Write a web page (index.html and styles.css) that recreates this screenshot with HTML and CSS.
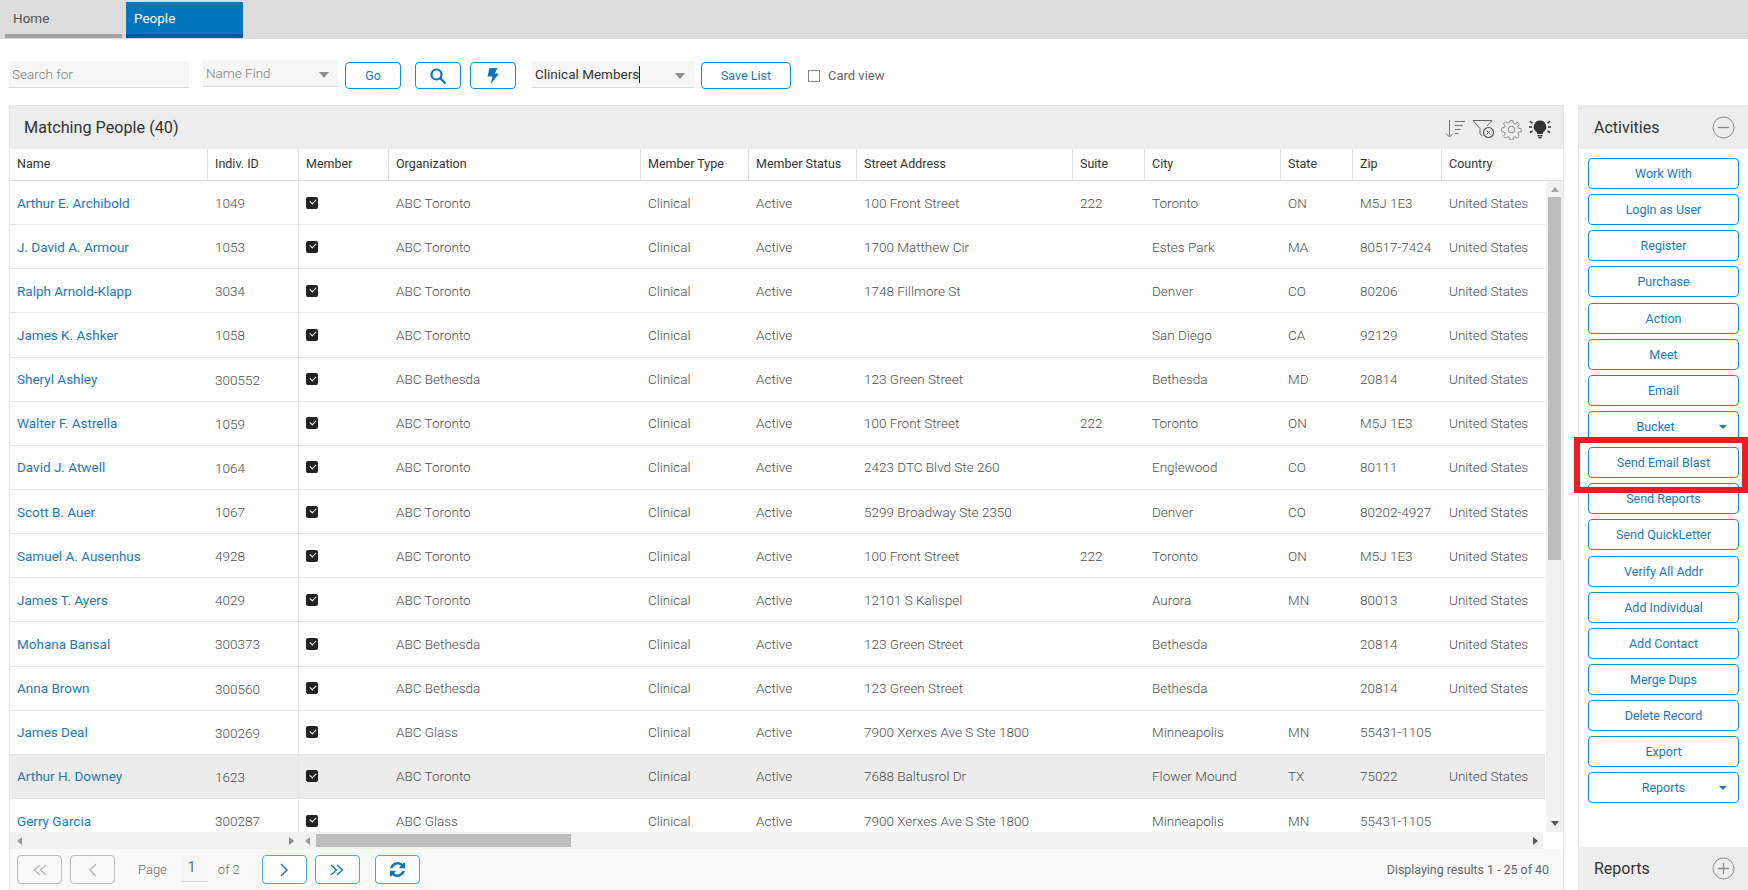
FILE: index.html
```html
<!DOCTYPE html>
<html lang="en">
<head>
<meta charset="utf-8">
<title>People</title>
<link rel="stylesheet" href="styles.css">
</head>
<body>
<nav class="topbar">
  <a class="tab tab-home">Home</a>
  <a class="tab tab-active">People</a>
</nav>
<div class="toolbar">
  <div class="field field-search"><span class="placeholder">Search for</span></div>
  <div class="field field-find"><span class="placeholder">Name Find</span><i class="caret"></i></div>
  <button class="btn btn-go">Go</button>
  <button class="btn btn-icon btn-search"><svg width="18" height="18" viewBox="0 0 18 18" fill="none" stroke="#0a75bd" stroke-width="2.2"><circle cx="7.5" cy="7.5" r="5"/><path d="M11.2 11.2 16 16" stroke-linecap="round"/></svg></button>
  <button class="btn btn-icon btn-bolt"><svg width="14" height="18" viewBox="0 0 14 18" fill="#0a75bd"><path d="M3.5 1h8L8.8 6.5H13L4.5 17.5 6.6 9.5H1.5z"/></svg></button>
  <div class="field field-list"><span class="value">Clinical Members</span><i class="cursor"></i><i class="caret"></i></div>
  <button class="btn btn-save">Save List</button>
  <label class="cardview"><i class="box"></i>Card view</label>
</div>
<main class="main">
  <section class="grid">
    <header class="grid-head">
      <h2 class="grid-title">Matching People (40)</h2>
      <div class="grid-tools">
        <svg width="21" height="20" viewBox="0 0 21 20" fill="none" stroke="#777" stroke-width="1"><path d="M4.5 1v17M1 14.5l3.500 3.500 3.500-3.500M10 2.500h10M10 6.500h8M10 10.500h5.500M10 14.500h3.500"/></svg>
        <svg width="23" height="20" viewBox="0 0 23 20" fill="none" stroke="#666" stroke-width="1"><path d="M1 1.500h19l-5 5.500M1 1.500l7 8v5.500l2.500 2"/><circle cx="16.500" cy="13.500" r="5" stroke="#555" stroke-width="1.200"/><path d="M14.700 11.700l3.600 3.600M18.300 11.700l-3.600 3.600"/></svg>
        <svg width="21" height="21" viewBox="0 0 21 21" fill="none" stroke="#888" stroke-width="1"><circle cx="10.500" cy="10.500" r="3.200"/><path d="M9 1h3l.5 2.800 1.800.8 2.400-1.600 2.100 2.100-1.600 2.400.8 1.800 2.800.5v3l-2.800.5-.8 1.800 1.600 2.400-2.100 2.100-2.400-1.600-1.800.8-.5 2.800H9l-.5-2.800-1.800-.8-2.400 1.600-2.100-2.100 1.600-2.400-.8-1.800-2.800-.5V9l2.800-.5.8-1.800L2.200 4.300l2.100-2.100 2.400 1.600 1.800-.8z" transform="translate(.5 .5) scale(.95)"/></svg>
        <svg width="24" height="21" viewBox="0 0 24 21"><path d="M12 1.500a6.300 6.300 0 0 0-3.800 11.300c.8.700 1 1.400 1 2.200h5.600c0-.8.200-1.500 1-2.200A6.300 6.300 0 0 0 12 1.500z" fill="#333"/><path d="M9.500 16h5v1.500h-5zM10 18h4l-.8 1.500h-2.400z" fill="#444"/><path d="M1 8h3M20 8h3M2 2.500l2.500 1.500M22 2.500 19.500 4M2 13.500 4.500 12M22 13.500 19.500 12" stroke="#333" stroke-width="1.500" fill="none"/></svg>
      </div>
    </header>
    <div class="row row-columns">
      <div class="hc">Name</div><div class="hc">Indiv. ID</div><div class="hc">Member</div><div class="hc">Organization</div><div class="hc">Member Type</div><div class="hc">Member Status</div><div class="hc">Street Address</div><div class="hc">Suite</div><div class="hc">City</div><div class="hc">State</div><div class="hc">Zip</div><div class="hc hc-last">Country</div>
    </div>
    <div class="grid-middle">
      <div class="rows">
        <div class="row"><a class="c link">Arthur E. Archibold</a><div class="c c-frozen">1049</div><div class="c"><i class="chk"></i></div><div class="c">ABC Toronto</div><div class="c">Clinical</div><div class="c">Active</div><div class="c">100 Front Street</div><div class="c">222</div><div class="c">Toronto</div><div class="c">ON</div><div class="c">M5J 1E3</div><div class="c">United States</div></div>
        <div class="row"><a class="c link">J. David A. Armour</a><div class="c c-frozen">1053</div><div class="c"><i class="chk"></i></div><div class="c">ABC Toronto</div><div class="c">Clinical</div><div class="c">Active</div><div class="c">1700 Matthew Cir</div><div class="c"></div><div class="c">Estes Park</div><div class="c">MA</div><div class="c">80517-7424</div><div class="c">United States</div></div>
        <div class="row"><a class="c link">Ralph Arnold-Klapp</a><div class="c c-frozen">3034</div><div class="c"><i class="chk"></i></div><div class="c">ABC Toronto</div><div class="c">Clinical</div><div class="c">Active</div><div class="c">1748 Fillmore St</div><div class="c"></div><div class="c">Denver</div><div class="c">CO</div><div class="c">80206</div><div class="c">United States</div></div>
        <div class="row"><a class="c link">James K. Ashker</a><div class="c c-frozen">1058</div><div class="c"><i class="chk"></i></div><div class="c">ABC Toronto</div><div class="c">Clinical</div><div class="c">Active</div><div class="c"></div><div class="c"></div><div class="c">San Diego</div><div class="c">CA</div><div class="c">92129</div><div class="c">United States</div></div>
        <div class="row"><a class="c link">Sheryl Ashley</a><div class="c c-frozen">300552</div><div class="c"><i class="chk"></i></div><div class="c">ABC Bethesda</div><div class="c">Clinical</div><div class="c">Active</div><div class="c">123 Green Street</div><div class="c"></div><div class="c">Bethesda</div><div class="c">MD</div><div class="c">20814</div><div class="c">United States</div></div>
        <div class="row"><a class="c link">Walter F. Astrella</a><div class="c c-frozen">1059</div><div class="c"><i class="chk"></i></div><div class="c">ABC Toronto</div><div class="c">Clinical</div><div class="c">Active</div><div class="c">100 Front Street</div><div class="c">222</div><div class="c">Toronto</div><div class="c">ON</div><div class="c">M5J 1E3</div><div class="c">United States</div></div>
        <div class="row"><a class="c link">David J. Atwell</a><div class="c c-frozen">1064</div><div class="c"><i class="chk"></i></div><div class="c">ABC Toronto</div><div class="c">Clinical</div><div class="c">Active</div><div class="c">2423 DTC Blvd Ste 260</div><div class="c"></div><div class="c">Englewood</div><div class="c">CO</div><div class="c">80111</div><div class="c">United States</div></div>
        <div class="row"><a class="c link">Scott B. Auer</a><div class="c c-frozen">1067</div><div class="c"><i class="chk"></i></div><div class="c">ABC Toronto</div><div class="c">Clinical</div><div class="c">Active</div><div class="c">5299 Broadway Ste 2350</div><div class="c"></div><div class="c">Denver</div><div class="c">CO</div><div class="c">80202-4927</div><div class="c">United States</div></div>
        <div class="row"><a class="c link">Samuel A. Ausenhus</a><div class="c c-frozen">4928</div><div class="c"><i class="chk"></i></div><div class="c">ABC Toronto</div><div class="c">Clinical</div><div class="c">Active</div><div class="c">100 Front Street</div><div class="c">222</div><div class="c">Toronto</div><div class="c">ON</div><div class="c">M5J 1E3</div><div class="c">United States</div></div>
        <div class="row"><a class="c link">James T. Ayers</a><div class="c c-frozen">4029</div><div class="c"><i class="chk"></i></div><div class="c">ABC Toronto</div><div class="c">Clinical</div><div class="c">Active</div><div class="c">12101 S Kalispel</div><div class="c"></div><div class="c">Aurora</div><div class="c">MN</div><div class="c">80013</div><div class="c">United States</div></div>
        <div class="row"><a class="c link">Mohana Bansal</a><div class="c c-frozen">300373</div><div class="c"><i class="chk"></i></div><div class="c">ABC Bethesda</div><div class="c">Clinical</div><div class="c">Active</div><div class="c">123 Green Street</div><div class="c"></div><div class="c">Bethesda</div><div class="c"></div><div class="c">20814</div><div class="c">United States</div></div>
        <div class="row"><a class="c link">Anna Brown</a><div class="c c-frozen">300560</div><div class="c"><i class="chk"></i></div><div class="c">ABC Bethesda</div><div class="c">Clinical</div><div class="c">Active</div><div class="c">123 Green Street</div><div class="c"></div><div class="c">Bethesda</div><div class="c"></div><div class="c">20814</div><div class="c">United States</div></div>
        <div class="row"><a class="c link">James Deal</a><div class="c c-frozen">300269</div><div class="c"><i class="chk"></i></div><div class="c">ABC Glass</div><div class="c">Clinical</div><div class="c">Active</div><div class="c">7900 Xerxes Ave S Ste 1800</div><div class="c"></div><div class="c">Minneapolis</div><div class="c">MN</div><div class="c">55431-1105</div><div class="c"></div></div>
        <div class="row row-selected"><a class="c link">Arthur H. Downey</a><div class="c c-frozen">1623</div><div class="c"><i class="chk"></i></div><div class="c">ABC Toronto</div><div class="c">Clinical</div><div class="c">Active</div><div class="c">7688 Baltusrol Dr</div><div class="c"></div><div class="c">Flower Mound</div><div class="c">TX</div><div class="c">75022</div><div class="c">United States</div></div>
        <div class="row"><a class="c link">Gerry Garcia</a><div class="c c-frozen">300287</div><div class="c"><i class="chk"></i></div><div class="c">ABC Glass</div><div class="c">Clinical</div><div class="c">Active</div><div class="c">7900 Xerxes Ave S Ste 1800</div><div class="c"></div><div class="c">Minneapolis</div><div class="c">MN</div><div class="c">55431-1105</div><div class="c"></div></div>
      </div>
      <div class="vscroll">
        <i class="arrow arrow-up"></i>
        <div class="vthumb"></div>
        <i class="arrow arrow-down"></i>
      </div>
    </div>
    <div class="hscroll">
      <div class="hs-frozen"><i class="arrow arrow-left"></i><i class="arrow arrow-right"></i></div>
      <div class="hs-main"><i class="arrow arrow-left"></i><div class="hthumb"></div><i class="arrow arrow-right"></i></div>
    </div>
    <footer class="pager">
      <button class="pbtn pbtn-off"><svg width="16" height="12" viewBox="0 0 16 12" fill="none" stroke="#bbb" stroke-width="1.500"><path d="M8 1 2.500 6 8 11M14 1 8.500 6l5.500 5"/></svg></button>
      <button class="pbtn pbtn-off"><svg width="10" height="14" viewBox="0 0 10 14" fill="none" stroke="#bbb" stroke-width="1.500"><path d="M8 1 2 7l6 6"/></svg></button>
      <span class="ptext ptext-page">Page</span>
      <span class="pnum">1</span>
      <span class="ptext ptext-of">of 2</span>
      <button class="pbtn pbtn-next"><svg width="10" height="14" viewBox="0 0 10 14" fill="none" stroke="#0a75bd" stroke-width="1.400"><path d="M2 1l6 6-6 6"/></svg></button>
      <button class="pbtn"><svg width="16" height="12" viewBox="0 0 16 12" fill="none" stroke="#0a75bd" stroke-width="1.300"><path d="M2 1l5.500 5L2 11M8 1l5.500 5L8 11"/></svg></button>
      <button class="pbtn pbtn-refresh"><svg width="15" height="15" viewBox="128 128 1536 1536" fill="#0a75bd"><path d="M1639 1056q0 5-1 7-64 268-268 434.500t-478 166.500q-146 0-282.500-55t-243.500-157l-129 129q-19 19-45 19t-45-19-19-45v-448q0-26 19-45t45-19h448q26 0 45 19t19 45-19 45l-137 137q71 66 161 102t187 36q134 0 250-65t186-179q11-17 53-117 8-23 30-23h192q13 0 22.500 9.500t9.500 22.500zm25-800v448q0 26-19 45t-45 19h-448q-26 0-45-19t-19-45 19-45l138-138q-148-137-349-137-134 0-250 65t-186 179q-11 17-53 117-8 23-30 23h-199q-13 0-22.500-9.500t-9.500-22.500v-7q65-268 270-434.500t480-166.500q146 0 284 55.500t245 156.500l130-129q19-19 45-19t45 19 19 45z"/></svg></button>
      <span class="presults">Displaying results 1 - 25 of 40</span>
    </footer>
  </section>
  <aside class="side">
    <header class="side-head">
      <h2 class="side-title">Activities</h2>
      <svg width="23" height="23" viewBox="0 0 23 23" fill="none" stroke="#8a8a8a"><circle cx="11.500" cy="11.500" r="10.500"/><path d="M6 11.500h11" stroke-width="1.300"/></svg>
    </header>
    <div class="actions">
      <button class="act">Work With</button>
      <button class="act">Login as User</button>
      <button class="act">Register</button>
      <button class="act">Purchase</button>
      <button class="act">Action</button>
      <button class="act">Meet</button>
      <button class="act">Email</button>
      <button class="act act-bucket">Bucket<i class="act-caret"></i></button>
      <button class="act act-marked">Send Email Blast</button>
      <button class="act">Send Reports</button>
      <button class="act">Send QuickLetter</button>
      <button class="act">Verify All Addr</button>
      <button class="act">Add Individual</button>
      <button class="act">Add Contact</button>
      <button class="act">Merge Dups</button>
      <button class="act">Delete Record</button>
      <button class="act">Export</button>
      <button class="act">Reports<i class="act-caret"></i></button>
    </div>
    <header class="side-head side-foot">
      <h2 class="side-title">Reports</h2>
      <svg width="23" height="23" viewBox="0 0 23 23" fill="none" stroke="#8a8a8a"><circle cx="11.500" cy="11.500" r="10.500"/><path d="M6 11.500h11M11.500 6v11" stroke-width="1.300"/></svg>
    </header>
  </aside>
</main>
</body>
</html>
```
FILE: styles.css
```css
* { box-sizing: border-box; }
html, body { height: 100%; }
body {
  margin: 0;
  height: 890px;
  overflow: hidden;
  background: #fff;
  display: flex;
  flex-direction: column;
  font-family: Roboto, "Liberation Sans", sans-serif;
  font-size: 13px;
  color: #555;
}
button { font-family: inherit; cursor: pointer; background: #fff; padding: 0; }
i { font-style: normal; display: block; }
h2 { margin: 0; font-weight: 400; }

.topbar {
  flex: none;
  height: 39px;
  background: #dcdcdc;
  display: flex;
  gap: 4px;
  padding: 2px 0 1px 5px;
}
.tab {
  width: 117px;
  padding: 8px 0 0 8px;
  font-size: 13.500px;
  border-bottom: 4px solid #a3a3a3;
  color: #555;
}
.tab-active {
  background: #0275bd;
  border-bottom-color: #00589b;
  color: #fff;
}

.toolbar {
  flex: none;
  height: 66px;
  display: flex;
  align-items: flex-start;
  padding: 22px 0 0 9px;
}
.field {
  position: relative;
  height: 27px;
  background: #f6f6f6;
  border-bottom: 1px solid #dedede;
  display: flex;
  align-items: center;
  padding-left: 3px;
  font-size: 13.500px;
}
.placeholder { color: #808080; font-weight: 300; }
.value { color: #333; }
.field-search { width: 180px; }
.field-find { width: 135px; margin: -1px 0 0 14px; padding-left: 3px; }
.field-list { width: 162px; margin-left: 16px; padding-left: 3px; }
.caret {
  position: absolute;
  right: 9px;
  top: 12px;
  border: 5px solid transparent;
  border-top: 6px solid #8f8f8f;
  border-bottom: 0;
}
.cursor { width: 1px; height: 17px; background: #222; }
.btn {
  height: 27px;
  border: 1px solid #0a8fd6;
  border-radius: 4px;
  color: #1b78c2;
  font-size: 12.500px;
  margin-top: 1px;
  display: flex;
  align-items: center;
  justify-content: center;
}
.btn-go { width: 56px; margin-left: 7px; }
.btn-icon { width: 46px; }
.btn-search { margin-left: 14px; }
.btn-bolt { margin-left: 9px; }
.btn-save { width: 90px; margin-left: 7px; }
.cardview {
  margin: 7px 0 0 17px;
  display: flex;
  align-items: center;
  gap: 8px;
  color: #666;
  line-height: 15px;
}
.box { width: 12px; height: 12px; border: 1px solid #888; background: #fff; }

.main {
  flex: 1;
  min-height: 0;
  display: flex;
  padding-left: 9px;
}
.grid {
  width: 1555px;
  flex: none;
  border: 1px solid #e6e6e6;
  border-bottom: 0;
  display: flex;
  flex-direction: column;
  min-height: 0;
}
.grid-head {
  flex: none;
  height: 43px;
  background: #ededed;
  display: flex;
  align-items: center;
  justify-content: space-between;
  padding: 0 11px 0 14px;
}
.grid-title { font-size: 16.200px; color: #333; }
.grid-tools { display: flex; align-items: center; gap: 6px; padding-top: 3px; }

.row {
  display: grid;
  grid-template-columns: 198px 91px 90px 252px 108px 108px 216px 72px 136px 72px 89px 103px;
  width: 1535px;
  height: 44.15px;
  border-bottom: 1px solid #e6e6e6;
  flex: none;
}
.row-columns {
  height: 32px;
  width: 100%;
  border-bottom: 1px solid #e0e0e0;
  flex: none;
}
.hc {
  border-right: 1px solid #e0e0e0;
  padding: 0 7px;
  line-height: 30px;
  color: #333;
  font-size: 12.500px;
  white-space: nowrap;
}
.hc-last { border-right: 0; }
.grid-middle {
  flex: 1;
  min-height: 0;
  display: flex;
}
.rows {
  width: 1535px;
  flex: none;
  overflow: hidden;
  display: flex;
  flex-direction: column;
}
.c {
  padding: 0 7px;
  display: flex;
  align-items: center;
  white-space: nowrap;
  color: #4d4d4d;
  font-size: 13.500px;
  font-weight: 300;
}
.link { color: #1b78c2; font-weight: 400; }
.c-frozen { border-right: 1px solid #e6e6e6; margin-bottom: -1px; }
.row-selected { background: #ececec; }
.chk {
  position: relative;
  width: 12px;
  height: 12px;
  border-radius: 2px;
  background: #222;
}
.chk::after {
  content: "";
  position: absolute;
  left: 3.500px;
  top: 2.500px;
  width: 5px;
  height: 3px;
  border-left: 1.500px solid #fff;
  border-bottom: 1.500px solid #fff;
  transform: rotate(-45deg);
}

.vscroll {
  width: 17px;
  margin-left: 1px;
  flex: none;
  background: #f1f1f1;
  display: flex;
  flex-direction: column;
  align-items: center;
  padding: 6px 0 6px;
}
.vthumb { width: 13px; height: 363px; background: #bdbdbd; margin-top: 5px; }
.arrow { width: 0; height: 0; border: 4px solid transparent; flex: none; }
.arrow-up { border-top: 0; border-bottom: 5px solid #a8a8a8; }
.arrow-down { border-bottom: 0; border-top: 5px solid #555; margin-top: auto; }
.arrow-left { border-left: 0; border-right: 5px solid #999; }
.arrow-right { border-right: 0; border-left: 5px solid #888; }

.hscroll {
  flex: none;
  height: 17px;
  display: flex;
  width: 1533px;
}
.hs-frozen {
  width: 289px;
  background: #f1f1f1;
  display: flex;
  align-items: center;
  justify-content: space-between;
  padding: 0 5px 0 7px;
}
.hs-main {
  flex: 1;
  background: #f1f1f1;
  display: flex;
  align-items: center;
  padding: 0 5px 0 6px;
}
.hthumb { width: 255px; height: 13px; margin-left: 6px; background: #bdbdbd; }
.hs-main .arrow-right { margin-left: auto; border-left-color: #555; }

.pager {
  flex: none;
  height: 41px;
  background: #f9f9f9;
  display: flex;
  align-items: flex-start;
  padding: 6px 14px 0 7px;
}
.pbtn {
  width: 45px;
  height: 29px;
  margin-right: 8px;
  border: 1px solid #3fa9e0;
  border-radius: 4px;
  background: #fff;
  display: flex;
  align-items: center;
  justify-content: center;
}
.pbtn-off { border-color: #bbb; background: #f9f9f9; }
.pbtn-refresh { margin-left: 7px; margin-right: 0; }
.ptext { line-height: 29px; color: #666; font-weight: 300; }
.ptext-page { margin-left: 15px; }
.pnum {
  width: 27px;
  height: 27px;
  margin-left: 14px;
  background: #f6f6f6;
  border-bottom: 1px solid #dedede;
  font-size: 14px;
  line-height: 24px;
  padding-left: 7px;
  color: #666;
}
.ptext-of { width: 44px; margin-left: 10px; }
.presults { margin-left: auto; line-height: 29px; color: #666; font-size: 12.400px; }

.side {
  flex: 1;
  margin-left: 14px;
  border-left: 1px solid #e6e6e6;
  display: flex;
  flex-direction: column;
  min-width: 0;
}
.side-head {
  flex: none;
  height: 44px;
  background: #ededed;
  display: flex;
  align-items: center;
  justify-content: space-between;
  padding: 0 13px 0 15px;
}
.side-title { font-size: 16px; color: #333; }
.side-foot { margin-top: auto; height: 43px; }
.actions {
  display: flex;
  flex-direction: column;
  gap: 5.150px;
  padding: 9px 0 0 9px;
}
.act {
  position: relative;
  width: 151px;
  height: 31px;
  border: 1px solid #0a8fd6;
  border-radius: 4px;
  color: #1b78c2;
  font-size: 12.500px;
  flex: none;
}
.act-caret {
  position: absolute;
  right: 11px;
  top: 13px;
  border: 4px solid transparent;
  border-top: 4px solid #1b78c2;
  border-bottom: 0;
}
.act-bucket { padding-right: 16px; }
.act-marked::after {
  content: "";
  position: absolute;
  left: -15px;
  right: -10px;
  top: -11px;
  bottom: -16px;
  border: 6px solid #ed1c24;
  z-index: 2;
  pointer-events: none;
}
```
